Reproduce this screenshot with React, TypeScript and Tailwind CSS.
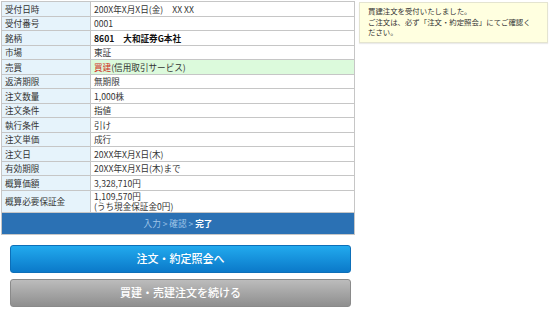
import React from "react";

const rows: { label: string; value: React.ReactNode; green?: boolean }[] = [
  { label: "受付日時", value: (<><span>200X年X月X日(金)</span><span className="ml-[9px]">XX XX</span></>) },
  { label: "受付番号", value: "0001" },
  { label: "銘柄", value: (<span className="font-bold text-[#111]"><span>8601</span><span className="ml-[9px]">大和証券G本社</span></span>) },
  { label: "市場", value: "東証" },
  { label: "売買", value: (<><span className="text-[#d0301c]">買建</span><span>(信用取引サービス)</span></>), green: true },
  { label: "返済期限", value: "無期限" },
  { label: "注文数量", value: "1,000株" },
  { label: "注文条件", value: "指値" },
  { label: "執行条件", value: "引け" },
  { label: "注文単価", value: "成行" },
  { label: "注文日", value: "20XX年X月X日(木)" },
  { label: "有効期限", value: "20XX年X月X日(木)まで" },
  { label: "概算価額", value: "3,328,710円" },
];

export default function App() {
  return (
    <div
      className="w-[550px] h-[316px] bg-white overflow-hidden flex items-start pl-px pt-px gap-[4px] text-[#333]"
      style={{ fontFamily: '"Noto Sans CJK JP", "Noto Sans", sans-serif' }}
    >
      <div className="w-[354px] flex flex-col">
        <div className="border border-[#c6c6c6] flex flex-col text-[8.6px] leading-[10px]">
          {rows.map((r, i) => (
            <div key={i} className="flex h-[14.5px] border-b border-[#c6c6c6]">
              <div className="w-[89px] shrink-0 bg-[#e6f3fb] border-r border-[#c6c6c6] pl-[3px] flex items-center">
                {r.label}
              </div>
              <div className={`flex-1 pl-[3px] flex items-center ${r.green ? "bg-[#dcfadc]" : "bg-white"}`}>
                {r.value}
              </div>
            </div>
          ))}
          <div className="flex h-[22px] border-b border-[#c6c6c6]">
            <div className="w-[89px] shrink-0 bg-[#e6f3fb] border-r border-[#c6c6c6] pl-[3px] flex items-center">
              概算必要保証金
            </div>
            <div className="flex-1 pl-[3px] flex flex-col justify-center leading-[10.5px]">
              <span>1,109,570円</span>
              <span>(うち現金保証金0円)</span>
            </div>
          </div>
          <div className="h-[21px] bg-[#2b71b4] flex items-center justify-center text-[8.6px]">
            <span className="text-[#9ec4e8]">入力 &gt; 確認 &gt; </span>
            <span className="text-white font-bold ml-[2px]">完了</span>
          </div>
        </div>
        <div className="flex flex-col gap-[6px] pl-[9px] pr-[4px] mt-[10px]">
          <button className="h-[28px] rounded-[3px] border border-[#0d6fb8] bg-gradient-to-b from-[#22aaee] to-[#0b79c9] text-white text-[11px] font-medium flex items-center justify-center">
            注文・約定照会へ
          </button>
          <button className="h-[28px] rounded-[3px] border border-[#8a8a8a] bg-gradient-to-b from-[#bcbcbc] to-[#8f8f8f] text-white text-[11px] font-medium flex items-center justify-center">
            買建・売建注文を続ける
          </button>
        </div>
      </div>
      <div className="mt-[1px] w-[189px] h-[41px] bg-[#ffffe0] border border-[#e4e4d0] shadow-[0_1px_1px_rgba(0,0,0,0.08)] pl-[8px] pt-[3px] text-[7.4px] leading-[10.5px] text-[#333] whitespace-nowrap">
        <div>買建注文を受付いたしました。</div>
        <div>ご注文は、必ず「注文・約定照会」にてご確認く</div>
        <div>ださい。</div>
      </div>
    </div>
  );
}
